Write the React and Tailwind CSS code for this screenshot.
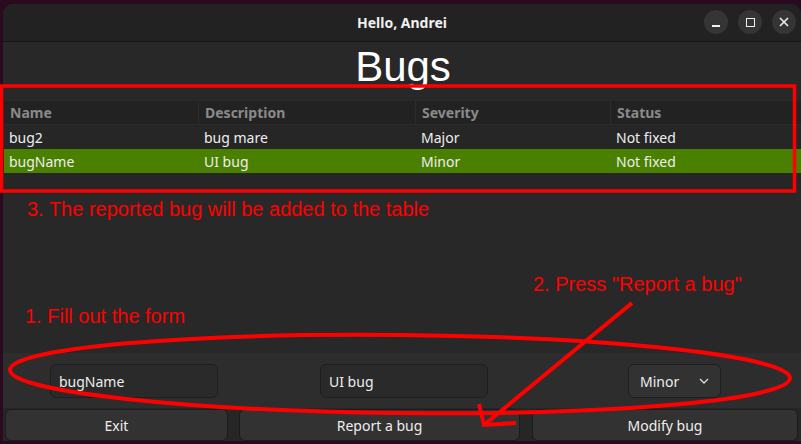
import React from "react";

const ui = { fontFamily: '"Noto Sans", "DejaVu Sans", sans-serif' };
const arial = { fontFamily: '"Liberation Sans", Arial, sans-serif' };

const cols = [
  { w: "w-[194px]", name: "Name" },
  { w: "w-[217px]", name: "Description" },
  { w: "w-[195px]", name: "Severity" },
  { w: "flex-1", name: "Status" },
];

const rows = [
  ["bug2", "bug mare", "Major", "Not fixed"],
  ["bugName", "UI bug", "Minor", "Not fixed"],
];

export default function App() {
  return (
    <div className="relative w-[801px] h-[444px] overflow-hidden bg-[#2a0a1e] pt-[4px] pl-[3px]" style={ui}>
      <div className="w-[798px] h-[437px] rounded-t-[10px] bg-[#282828] flex flex-col overflow-hidden">
        {/* title bar */}
        <div className="h-[38px] shrink-0 bg-[#222222] border-b border-[#151515] flex items-center relative">
          <div className="flex-1 text-center text-[14px] font-bold text-[#f0f0f0]">Hello, Andrei</div>
          <div className="absolute right-[5px] top-[6px] flex gap-[10px]">
            <div className="w-[24px] h-[24px] rounded-full bg-[#353535] flex items-center justify-center">
              <div className="w-[8px] h-[2px] bg-[#f0f0f0] mt-[7px]" />
            </div>
            <div className="w-[24px] h-[24px] rounded-full bg-[#353535] flex items-center justify-center">
              <div className="w-[9px] h-[9px] border-[1.5px] border-[#f0f0f0]" />
            </div>
            <div className="w-[24px] h-[24px] rounded-full bg-[#353535] flex items-center justify-center">
              <svg width="10" height="10" viewBox="0 0 10 10">
                <path d="M1 1L9 9M9 1L1 9" stroke="#f0f0f0" strokeWidth="1.6" />
              </svg>
            </div>
          </div>
        </div>

        {/* heading */}
        <div className="h-[55px] shrink-0 pt-[4px] text-center text-[42px] leading-none text-white pl-[2px]" style={arial}>
          Bugs
        </div>

        {/* table */}
        <div className="h-[93px] shrink-0 pt-[4px] pl-[1px]">
          <div className="h-full bg-[#262626] flex flex-col">
            <div className="h-[24px] flex bg-[#222222] border-b border-[#2c2c2c]">
              {cols.map((c, i) => (
                <div
                  key={i}
                  className={`${c.w} h-full flex items-center pl-[6px] text-[14px] font-bold text-[#8a8a8a] ${i > 0 ? "border-l border-[#2c2c2c]" : ""}`}
                >
                  {c.name}
                </div>
              ))}
            </div>
            {rows.map((r, ri) => (
              <div key={ri} className={`h-[24px] flex ${ri === 1 ? "bg-[#4a8000]" : ""}`}>
                {r.map((cell, ci) => (
                  <div
                    key={ci}
                    className={`${cols[ci].w} h-full flex items-center text-[14px] text-[#eeeeee] ${ci > 0 ? "pl-[6px]" : "pl-[5px]"}`}
                  >
                    {cell}
                  </div>
                ))}
              </div>
            ))}
          </div>
        </div>

        <div className="flex-1" />

        {/* form */}
        <div className="h-[55px] shrink-0 bg-[#2d2d2d] flex items-start pt-[11px]">
          <div className="ml-[47px] w-[168px] h-[34px] rounded-[6px] bg-[#2a2a2a] border border-[#1e1e1e] flex items-center pl-[8px] text-[14px] text-[#eeeeee]">
            bugName
          </div>
          <div className="ml-[102px] w-[168px] h-[34px] rounded-[6px] bg-[#2a2a2a] border border-[#1e1e1e] flex items-center pl-[8px] text-[14px] text-[#eeeeee]">
            UI bug
          </div>
          <div className="ml-[140px] w-[93px] h-[34px] rounded-[6px] bg-[#323232] border border-[#1e1e1e] flex items-center pl-[11px] pr-[10px] justify-between text-[14px] text-[#eeeeee]">
            <span>Minor</span>
            <svg width="12" height="8" viewBox="0 0 12 8">
              <path d="M2 2L6 6L10 2" stroke="#dddddd" strokeWidth="1.3" fill="none" />
            </svg>
          </div>
        </div>

        {/* buttons */}
        <div className="h-[33px] shrink-0 bg-[#262626] flex items-end pl-[2px] pt-[1px]">
          <div className="w-[223px] h-[32px] rounded-[6px] bg-[#323232] border border-[#1b1b1b] flex items-center justify-center text-[14px] text-[#eeeeee]">
            Exit
          </div>
          <div className="ml-[11px] w-[281px] h-[32px] rounded-[6px] bg-[#323232] border border-[#1b1b1b] flex items-center justify-center text-[14px] text-[#eeeeee]">
            Report a bug
          </div>
          <div className="ml-[12px] w-[266px] h-[32px] rounded-[6px] bg-[#323232] border border-[#1b1b1b] flex items-center justify-center text-[14px] text-[#eeeeee]">
            Modify bug
          </div>
        </div>
      </div>

      {/* annotations */}
      <svg className="absolute inset-0 pointer-events-none" width="801" height="444" viewBox="0 0 801 444">
        <rect x="1.5" y="86" width="793" height="105" fill="none" stroke="#ff0000" strokeWidth="3.5" />
        <ellipse cx="400" cy="374" rx="390" ry="39" fill="none" stroke="#ff0000" strokeWidth="4" transform="rotate(0.6 400 374)" />
        <path d="M632 303L484 425M479 404L484 425L516 423" fill="none" stroke="#ff0000" strokeWidth="4" />
      </svg>
      <div className="absolute left-[27px] top-[199px] text-[20px] leading-none text-[#ff0000] whitespace-nowrap" style={arial}>
        3. The reported bug will be added to the table
      </div>
      <div className="absolute left-[25px] top-[306px] text-[20px] leading-none text-[#ff0000] whitespace-nowrap" style={arial}>
        1. Fill out the form
      </div>
      <div className="absolute left-[533px] top-[274px] text-[20px] leading-none text-[#ff0000] whitespace-nowrap" style={arial}>
        2. Press "Report a bug"
      </div>
    </div>
  );
}
